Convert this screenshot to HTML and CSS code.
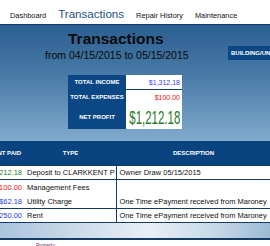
FILE: index.html
```html
<!DOCTYPE html>
<html>
<head>
<meta charset="utf-8">
<link rel="stylesheet" href="styles.css">
</head>
<body>
<nav class="tabs">
  <a class="tab">Dashboard</a>
  <a class="tab active">Transactions</a>
  <a class="tab">Repair History</a>
  <a class="tab">Maintenance</a>
</nav>
<header class="hero">
  <div class="hero-main">
    <h1 class="title">Transactions</h1>
    <p class="range">from 04/15/2015 to 05/15/2015</p>
    <table class="summary">
      <colgroup><col class="col-label"><col class="col-value"></colgroup>
      <tr class="s-income"><th>TOTAL INCOME</th><td class="income">$1,312.18</td></tr>
      <tr class="s-exp"><th>TOTAL EXPENSES</th><td class="expense">$100.00</td></tr>
      <tr class="s-net"><th>NET PROFIT</th><td class="net"><span class="net-num">$1,212.18</span></td></tr>
    </table>
  </div>
  <div class="hero-side">
    <button class="unit-btn">BUILDING/UNIT</button>
  </div>
</header>
<div class="grid-wrap">
  <table class="tx">
    <colgroup><col class="col-amt"><col class="col-type"><col class="col-desc"></colgroup>
    <thead>
      <tr><th class="c-amt">AMOUNT PAID</th><th class="c-type">TYPE</th><th class="c-desc">DESCRIPTION</th></tr>
    </thead>
    <tbody>
      <tr class="r-line"><td class="c-amt green">$1,212.18</td><td class="c-type">Deposit to CLARKKENT P</td><td class="c-desc">Owner Draw 05/15/2015</td></tr>
      <tr class="r-open"><td class="c-amt red">$100.00</td><td class="c-type">Management Fees</td><td class="c-desc"></td></tr>
      <tr class="r-line"><td class="c-amt blue">$62.18</td><td class="c-type">Utility Charge</td><td class="c-desc">One Time ePayment received from Maroney</td></tr>
      <tr class="r-line"><td class="c-amt blue">$250.00</td><td class="c-type">Rent</td><td class="c-desc">One Time ePayment received from Maroney</td></tr>
    </tbody>
  </table>
</div>
<div class="band"></div>
<div class="foot"><span class="foot-link">Property</span></div>
</body>
</html>
```
FILE: styles.css
```css
html, body {
  margin: 0;
  padding: 0;
  background: #fff;
  overflow: hidden;
}
body {
  width: 270px;
  font-family: "Liberation Sans", Arial, sans-serif;
  color: #111;
}
.tabs {
  box-sizing: border-box;
  height: 24px;
  padding: 7px 0 0 10px;
  display: flex;
  align-items: baseline;
  white-space: nowrap;
}
.tab {
  font-size: 7.4px;
  color: #111;
  margin-right: 12px;
  line-height: 14px;
}
.tab.active {
  font-size: 11.6px;
  color: #1d4f86;
}
.hero {
  border-top: 1px solid #143a66;
  height: 115px;
  background: linear-gradient(180deg, #2b5f91 0%, #4a7ba8 45%, #80aacd 100%);
  display: flex;
  overflow: hidden;
}
.hero-main {
  width: 228px;
  flex: none;
}
.title {
  margin: 5px 0 0 68px;
  font-size: 15.5px;
  line-height: 18px;
  font-weight: bold;
  color: #0a0a0a;
}
.range {
  margin: 1px 0 0 45px;
  font-size: 10.5px;
  line-height: 13px;
  color: #0a0a0a;
  white-space: nowrap;
}
.summary {
  margin: 13px 0 0 68px;
  border-collapse: collapse;
  width: 114px;
  table-layout: fixed;
}
.col-label { width: 58px; }
.col-value { width: 56px; }
.summary th {
  background: #0c4785;
  color: #fff;
  font-size: 6px;
  font-weight: bold;
  padding: 0;
  text-align: center;
  white-space: nowrap;
}
.summary td {
  background: #fff;
  text-align: right;
  padding: 0 2px 0 0;
  font-size: 7px;
  white-space: nowrap;
}
.s-income th, .s-income td { height: 14px; }
.s-income td { border-bottom: 1px solid #143a66; }
.s-exp th, .s-exp td { height: 14px; }
.s-net th, .s-net td { height: 25px; }
.income { color: #3b3bff; }
.expense { color: #f01010; }
.net { color: #1f7a1f; }
.net-num {
  display: inline-block;
  margin-left: -34px;
  font-size: 18.5px;
  line-height: 20px;
  transform: scaleX(0.62);
  transform-origin: right center;
  padding-top: 2px;
}
.hero-side {
  padding-top: 21px;
}
.unit-btn {
  display: block;
  border: 0;
  margin: 0;
  background: #0c4785;
  color: #fff;
  font-family: inherit;
  font-weight: bold;
  font-size: 6px;
  height: 14px;
  padding: 0 3px;
  white-space: nowrap;
}
.grid-wrap {
  overflow: hidden;
  background: #82acce;
  padding-top: 1px;
}
.tx {
  border-collapse: collapse;
  margin-left: -40px;
  width: 311px;
  table-layout: fixed;
  background: #fff;
}
.col-amt { width: 65px; }
.col-type { width: 91px; }
.tx th {
  background: #0a4480;
  color: #fff;
  font-size: 6px;
  font-weight: bold;
  height: 24px;
  padding: 0;
  text-align: center;
  border-bottom: 1px solid #143a66;
  white-space: nowrap;
}
.tx th.c-amt { text-align: right; padding-right: 4px; }
.tx td {
  font-size: 7.5px;
  height: 13px;
  padding: 0;
  white-space: nowrap;
  overflow: hidden;
  vertical-align: middle;
  color: #111;
}
.tx td.c-amt { text-align: right; padding-right: 3px; }
.tx td.c-type { padding-left: 2px; }
.tx td.c-desc { padding-left: 3px; border-left: 1px solid #143a66; }
.r-line td { border-bottom: 1px solid #143a66; }
.r-open td { height: 15px; }
.green { color: #1f7a1f !important; }
.red { color: #f01010 !important; }
.blue { color: #2b3bd8 !important; }
.band {
  height: 15px;
  background: linear-gradient(90deg, #a9c4dc 0%, #d3e0ec 35%, #e8eff6 55%, #c6d8e7 80%, #9dbbd4 100%);
  border-bottom: 2px solid #143a66;
}
.foot {
  padding: 2px 0 0 36px;
  font-size: 5px;
  line-height: 6px;
}
.foot-link {
  color: #6a2a55;
}
```
